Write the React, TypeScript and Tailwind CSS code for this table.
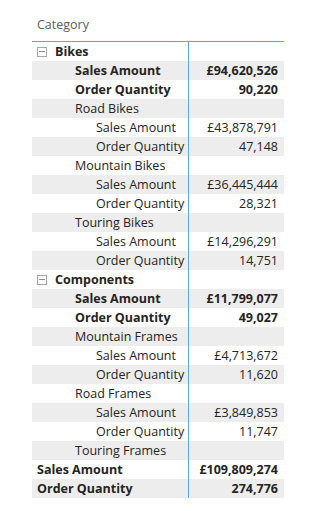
import React from "react";

type Row = {
  label: string;
  value?: string;
  indent: number;
  bold?: boolean;
  toggle?: boolean;
};

const rows: Row[] = [
  { label: "Bikes", indent: 5, bold: true, toggle: true },
  { label: "Sales Amount", value: "£94,620,526", indent: 43, bold: true },
  { label: "Order Quantity", value: "90,220", indent: 43, bold: true },
  { label: "Road Bikes", indent: 43 },
  { label: "Sales Amount", value: "£43,878,791", indent: 64 },
  { label: "Order Quantity", value: "47,148", indent: 64 },
  { label: "Mountain Bikes", indent: 43 },
  { label: "Sales Amount", value: "£36,445,444", indent: 64 },
  { label: "Order Quantity", value: "28,321", indent: 64 },
  { label: "Touring Bikes", indent: 43 },
  { label: "Sales Amount", value: "£14,296,291", indent: 64 },
  { label: "Order Quantity", value: "14,751", indent: 64 },
  { label: "Components", indent: 5, bold: true, toggle: true },
  { label: "Sales Amount", value: "£11,799,077", indent: 43, bold: true },
  { label: "Order Quantity", value: "49,027", indent: 43, bold: true },
  { label: "Mountain Frames", indent: 43 },
  { label: "Sales Amount", value: "£4,713,672", indent: 64 },
  { label: "Order Quantity", value: "11,620", indent: 64 },
  { label: "Road Frames", indent: 43 },
  { label: "Sales Amount", value: "£3,849,853", indent: 64 },
  { label: "Order Quantity", value: "11,747", indent: 64 },
  { label: "Touring Frames", indent: 43 },
  { label: "Sales Amount", value: "£109,809,274", indent: 5, bold: true },
  { label: "Order Quantity", value: "274,776", indent: 5, bold: true },
];

function Toggle() {
  return (
    <span className="mr-[8px] flex h-[10px] w-[10px] items-center justify-center border border-[#a6a6a6]">
      <span className="h-px w-[6px] bg-[#8a8a8a]" />
    </span>
  );
}

export default function App() {
  return (
    <div
      className="h-[511px] w-[309px] bg-white text-[12.5px] text-[#252423]"
      style={{ fontFamily: '"Open Sans", "Liberation Sans", sans-serif' }}
    >
      <div className="ml-[32px] w-[252px]">
        <div className="h-[42px] border-b border-[#62a3e6] pl-[5px] pt-[15px] leading-[19px] text-[#605e5c]">
          Category
        </div>
        {rows.map((row, i) => (
          <div
            key={i}
            className={`grid h-[19px] grid-cols-[156px_96px] leading-[19px] ${
              i % 2 === 1 ? "bg-[#ededed]" : ""
            } ${row.bold ? "font-bold" : ""}`}
          >
            <div
              className="flex items-center whitespace-nowrap"
              style={{ paddingLeft: row.indent }}
            >
              {row.toggle && <Toggle />}
              {row.label}
            </div>
            <div className="border-l border-[#62a3e6] pr-[6px] text-right">
              {row.value}
            </div>
          </div>
        ))}
      </div>
    </div>
  );
}
